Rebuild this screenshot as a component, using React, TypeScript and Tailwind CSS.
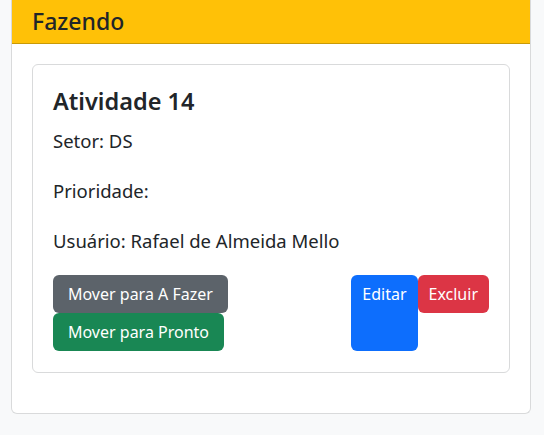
export default function App() {
  return (
    <div className="min-h-screen bg-[#f8f9fa] text-[#212529]">
      <div
        className="ml-[11px] w-[520px] rounded-b-md border border-t-0 border-[#d9dadb] bg-white"
        style={{ fontFamily: '"Noto Sans", "Open Sans", sans-serif' }}
      >
        <div className="flex h-[44px] items-center border-b border-[#c99a06] bg-[#ffc107] px-5">
          <h3 className="text-[23px] font-medium leading-none">Fazendo</h3>
        </div>
        <div className="p-5">
          <div className="mb-5 rounded-md border border-[#d9dadb] px-5 pt-5 pb-[21px]">
            <h5 className="mb-[13px] pt-[2px] text-[23.5px] font-semibold leading-[1.2]">Atividade 14</h5>
            <p className="text-[18.5px] leading-[26px]">Setor: DS</p>
            <p className="mt-[24px] text-[18.5px] leading-[26px]">Prioridade:</p>
            <p className="mt-[24px] text-[18.5px] leading-[26px]">Usuário: Rafael de Almeida Mello</p>
            <div className="mt-[21px] flex justify-between">
              <div className="flex flex-col items-start">
                <button className="h-[38px] rounded-md bg-[#5c636a] px-[15px] text-[16px] leading-6 text-white">Mover para A Fazer</button>
                <button className="h-[38px] rounded-md bg-[#198754] px-[15px] text-[16px] leading-6 text-white">Mover para Pronto</button>
              </div>
              <div className="flex">
                <button className="flex items-start self-stretch rounded-md bg-[#0d6efd] px-[11px] pt-[7px] text-[16px] leading-6 text-white">Editar</button>
                <button className="h-[38px] self-start rounded-md bg-[#dc3545] px-[11px] text-[16px] leading-6 text-white">Excluir</button>
              </div>
            </div>
          </div>
        </div>
      </div>
    </div>
  );
}
